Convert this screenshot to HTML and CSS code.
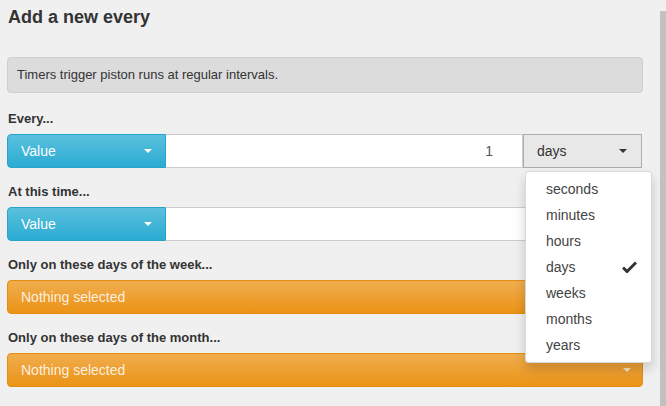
FILE: index.html
```html
<!DOCTYPE html>
<html>
<head>
<meta charset="utf-8">
<link rel="stylesheet" href="styles.css">
</head>
<body>
<div class="page">
  <div class="modal">
    <span class="close">×</span>
    <h4 class="title">Add a new every</h4>
    <div class="info">Timers trigger piston runs at regular intervals.</div>

    <div class="group">
      <div class="label">Every...</div>
      <div class="row">
        <div class="btn-value"><span>Value</span><span class="caret"></span></div>
        <div class="input num">1</div>
        <div class="select">
          <span>days</span><span class="caret dark"></span>
          <ul class="menu">
            <li>seconds</li>
            <li>minutes</li>
            <li>hours</li>
            <li class="checked">days
              <svg class="check" width="15" height="12" viewBox="0 0 15 12"><path d="M1 6.5 L5 10.5 L14 1.5" fill="none" stroke="#333" stroke-width="3" stroke-linejoin="miter"/></svg>
            </li>
            <li>weeks</li>
            <li>months</li>
            <li>years</li>
          </ul>
        </div>
      </div>
    </div>

    <div class="group">
      <div class="label">At this time...</div>
      <div class="row">
        <div class="btn-value"><span>Value</span><span class="caret"></span></div>
        <div class="input wide"></div>
      </div>
    </div>

    <div class="group">
      <div class="label">Only on these days of the week...</div>
      <div class="bar"><span>Nothing selected</span><span class="caret light"></span></div>
    </div>

    <div class="group">
      <div class="label">Only on these days of the month...</div>
      <div class="bar"><span>Nothing selected</span><span class="caret light"></span></div>
    </div>
  </div>
  <div class="scrollbar"></div>
</div>
</body>
</html>
```
FILE: styles.css
```css
* { box-sizing: border-box; }
html, body {
  margin: 0;
  padding: 0;
  background: #f0f0f0;
  font-family: "Liberation Sans", Arial, sans-serif;
  color: #333;
  overflow: hidden;
}
.page {
  display: flex;
  height: 406px;
}
.modal {
  position: relative;
  width: 660px;
  padding: 7px 17px 0 7px;
}
.scrollbar {
  width: 6px;
  margin-top: 11px;
  background: #c1c1c1;
}
.close {
  position: absolute;
  top: -16px;
  right: 16px;
  font-size: 21px;
  font-weight: bold;
  color: #000;
  opacity: 0.2;
  line-height: 21px;
}
.title {
  margin: 0 0 0 1px;
  font-size: 18px;
  line-height: 20px;
  font-weight: bold;
  color: #333;
}
.info {
  margin-top: 30px;
  background: #dcdcdc;
  border: 1px solid #cfcfcf;
  border-radius: 4px;
  padding: 9px 9px;
  font-size: 13px;
  line-height: 16px;
  color: #333;
}
.group {
  margin-bottom: 16px;
}
.info + .group {
  margin-top: 18px;
}
.label {
  font-size: 13px;
  font-weight: bold;
  line-height: 15px;
  margin: 0 0 8px 1px;
  color: #333;
}
.row {
  display: flex;
  height: 34px;
  width: 635px;
}
.btn-value {
  width: 159px;
  display: flex;
  align-items: center;
  justify-content: space-between;
  padding: 0 13px 0 13px;
  background: linear-gradient(to bottom, #5bc0de 0%, #2aabd2 100%);
  border: 1px solid #28a4c9;
  border-radius: 4px 0 0 4px;
  color: #fff;
  font-size: 14px;
}
.caret {
  display: inline-block;
  width: 0;
  height: 0;
  border-top: 4px solid #fff;
  border-left: 4px solid transparent;
  border-right: 4px solid transparent;
}
.caret.dark { border-top-color: #333; }
.caret.light { border-top-color: #fbe3c2; }
.input {
  background: #fff;
  border: 1px solid #ccc;
  border-left: none;
  font-size: 14px;
  color: #555;
  display: flex;
  align-items: center;
}
.input.num {
  width: 357px;
  justify-content: flex-end;
  padding-right: 29px;
}
.input.wide {
  flex: 1;
}
.select {
  position: relative;
  width: 119px;
  display: flex;
  align-items: center;
  justify-content: space-between;
  padding: 0 14px 0 13px;
  background: #e8e8e8;
  border: 1px solid #adadad;
  font-size: 14px;
  color: #333;
}
.menu {
  position: absolute;
  top: 36px;
  left: 1px;
  width: 127px;
  margin: 0;
  padding: 4px 0;
  list-style: none;
  background: #fff;
  border: 1px solid rgba(0,0,0,0.15);
  border-radius: 4px;
  box-shadow: 0 6px 12px rgba(0,0,0,0.175);
  z-index: 10;
}
.menu li {
  position: relative;
  height: 26px;
  line-height: 26px;
  padding-left: 20px;
  font-size: 14px;
  color: #444;
}
.check {
  position: absolute;
  right: 14px;
  top: 7px;
}
.bar {
  height: 34px;
  width: 636px;
  display: flex;
  align-items: center;
  justify-content: space-between;
  padding: 0 11px 0 13px;
  background: linear-gradient(to bottom, #f0ad4e 0%, #eb9316 100%);
  border: 1px solid #e38d13;
  border-radius: 4px;
  color: rgba(255,255,255,0.85);
  font-size: 14px;
}
```
